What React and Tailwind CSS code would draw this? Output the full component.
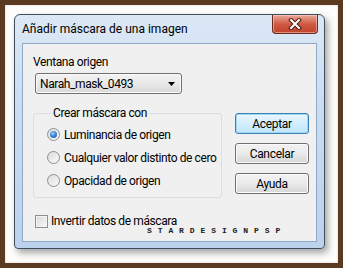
import React from 'react';

const ui = { fontFamily: 'Roboto, "Noto Sans", sans-serif' };

function Radio({ checked, label }) {
  return (
    <div className="flex items-center h-[15px] whitespace-nowrap">
      <span className="w-[13px] h-[13px] shrink-0 rounded-full border border-[#8c8f94] bg-gradient-to-br from-[#dcdcdc] to-[#fbfbfb] flex items-center justify-center">
        {checked && (
          <span className="w-[7px] h-[7px] rounded-full bg-[radial-gradient(circle_at_40%_35%,#a8d4ff_0%,#3a86d6_45%,#1c4f96_100%)]" />
        )}
      </span>
      <span className="ml-[4px]">{label}</span>
    </div>
  );
}

function Button({ children, primary }) {
  return (
    <button
      className={
        primary
          ? 'w-[74px] h-[21px] rounded-[3px] border border-[#3c7fb1] bg-gradient-to-b from-[#eaf6fd] to-[#bee6fd] shadow-[inset_0_0_0_1px_#9fd7f7] text-[12px] tracking-[-0.3px] leading-none'
          : 'w-[74px] h-[21px] rounded-[3px] border border-[#707070] bg-gradient-to-b from-[#f2f2f2] via-[#ebebeb] to-[#d5d5d5] shadow-[inset_0_0_0_1px_#fcfcfc] text-[12px] tracking-[-0.3px] leading-none'
      }
    >
      {children}
    </button>
  );
}

export default function App() {
  return (
    <div className="w-[343px] h-[268px] bg-[#5a3b22] p-[5px]" style={ui}>
      <div className="w-[333px] h-[258px] bg-[#fdfdfc] pl-[9px] pt-[9px] shadow-[inset_0_0_2px_#c9bfb4]">
        {/* dialog window */}
        <div className="w-[311px] h-[235px] rounded-t-[6px] rounded-b-[4px] border border-[#3e4d60] bg-gradient-to-b from-[#dbe8f6] via-[#c7daf0] to-[#bcd2ec] shadow-[3px_4px_7px_rgba(0,0,0,0.35)] flex flex-col">
          {/* title bar */}
          <div className="h-[28px] flex items-start pl-[7px] pr-[6px]">
            <span className="mt-[7px] text-[12px] leading-[15px] text-black whitespace-nowrap">Añadir máscara de una imagen</span>
            <div className="ml-auto w-[46px] h-[19px] rounded-b-[4px] border border-t-0 border-[#6b2a20] bg-gradient-to-b from-[#e9a99a] via-[#cf5a43] to-[#c2432c] shadow-[inset_0_0_0_1px_rgba(255,220,210,0.5)] flex items-center justify-center">
              <svg width="14" height="12" viewBox="0 0 14 12">
                <path d="M3 2 L11 10 M11 2 L3 10" stroke="#4a1a12" strokeWidth="4" strokeLinecap="square" />
                <path d="M3 2 L11 10 M11 2 L3 10" stroke="#fff" strokeWidth="2" strokeLinecap="square" />
              </svg>
            </div>
          </div>
          {/* client area */}
          <div className="mx-[7px] h-[199px] border border-[#8fa8c4] bg-[#f0f0f0] text-[12px] tracking-[-0.4px] text-black pl-[10px] pt-[11px]">
            <div className="flex">
              <div className="w-[189px] shrink-0 flex flex-col">
                <span className="leading-[15px]">Ventana origen</span>
                <div className="mt-[3px] ml-[2px] w-[147px] h-[21px] rounded-[3px] border border-[#707070] bg-gradient-to-b from-[#f3f3f3] via-[#e9e9e9] to-[#d8d8d8] shadow-[inset_0_0_0_1px_#fbfbfb] flex items-center pl-[4px] pr-[6px]">
                  <span className="leading-none">Narah_mask_0493</span>
                  <svg className="ml-auto" width="7" height="4" viewBox="0 0 7 4">
                    <path d="M0 0 H7 L3.5 4 Z" fill="#000" />
                  </svg>
                </div>
                <fieldset className="mt-[12px] h-[92px] border border-[#d5dfe5] rounded-[3px] pl-[13px]">
                  <legend className="ml-[4px] px-[2px] leading-[15px]">Crear máscara con</legend>
                  <div className="mt-[6px] flex flex-col gap-[8px]">
                    <Radio checked label="Luminancia de origen" />
                    <Radio label="Cualquier valor distinto de cero" />
                    <Radio label="Opacidad de origen" />
                  </div>
                </fieldset>
              </div>
              <div className="ml-[13px] mt-[58px] flex flex-col gap-[9px]">
                <Button primary>Aceptar</Button>
                <Button>Cancelar</Button>
                <Button>Ayuda</Button>
              </div>
            </div>
            <div className="mt-[16px] ml-[2px] flex items-center h-[15px]">
              <span className="w-[13px] h-[13px] border border-[#8e8f8f] bg-gradient-to-br from-[#d8d8d8] to-[#f8f8f8] shadow-[inset_0_0_0_1px_#f4f4f4]" />
              <span className="ml-[3px] leading-[15px]">Invertir datos de máscara</span>
            </div>
            <div
              className="ml-[114px] -mt-[2px] text-[8px] leading-[8px] tracking-[5.9px] text-[#1a1a1a] font-bold"
              style={{ fontFamily: '"Liberation Mono", monospace' }}
            >
              STARDESIGNPSP
            </div>
          </div>
        </div>
      </div>
    </div>
  );
}
